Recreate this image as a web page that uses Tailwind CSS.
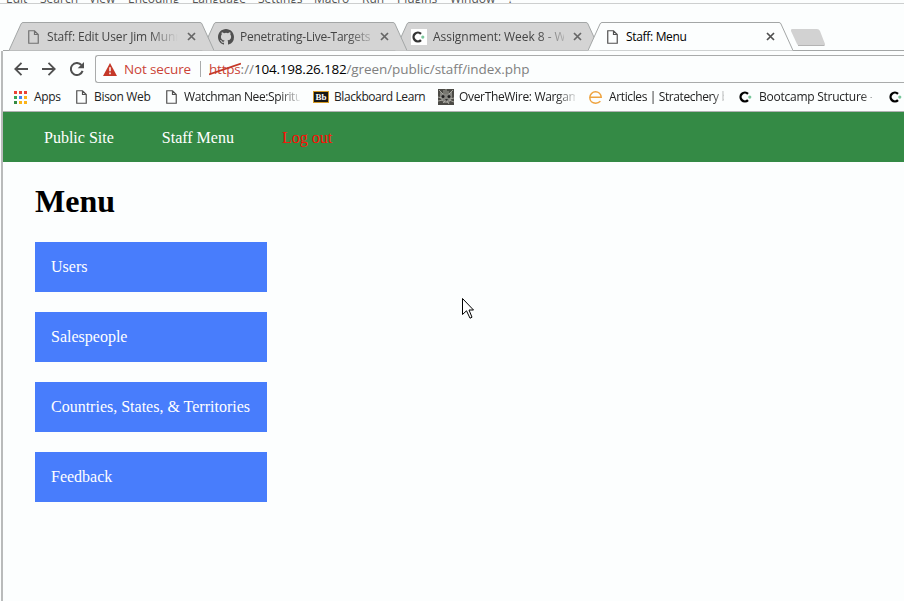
<!DOCTYPE html>
<html lang="en">
<head>
<meta charset="utf-8">
<title>Staff: Menu</title>
<script src="https://cdn.jsdelivr.net/npm/@tailwindcss/browser@4"></script>
</head>
<body class="w-[904px] h-[601px] overflow-hidden bg-[#fcfefe] font-['Open_Sans','Noto_Sans',sans-serif] text-[12px] text-[#222]">
<svg class="hidden">
  <symbol id="page" viewBox="0 0 11 14"><path d="M.75 .75H6.5L10.25 4.5V13.25H.75ZM6.5 .75V4.5H10.25" fill="none" stroke="currentColor" stroke-width="1.2"/></symbol>
  <symbol id="close" viewBox="0 0 9 9"><path d="M1 1L8 8M8 1L1 8" stroke="currentColor" stroke-width="1.7"/></symbol>
  <symbol id="cpath" viewBox="0 0 16 16"><path d="M10 4.8A4.4 4.4 0 1 0 10 11.2" fill="none" stroke="currentColor" stroke-width="2.4"/><circle cx="11.8" cy="8.1" r="1.6" fill="#79c79b"/></symbol>
  <symbol id="tab" viewBox="0 0 205 29"><path d="M0 28.5L12 2Q12.7 .5 14 .5H191Q192.5 .5 193 2L205 28.5Z" fill="currentColor"/><path d="M0 28.5L12 2Q12.7 .5 14 .5H191Q192.5 .5 193 2L205 28.5" fill="none" stroke="#a3a6a6"/></symbol>
</svg>

<div class="h-[4px] overflow-hidden border-b border-[#cdcfcf]">
  <div class="-mt-[9px] ml-[6px] flex h-[16px] leading-[16px] text-[#555] whitespace-nowrap">
    <span class="w-[34px]">Edit</span><span class="w-[49px]">Search</span><span class="w-[39px]">View</span><span class="w-[64px]">Encoding</span><span class="w-[66px]">Language</span><span class="w-[56px]">Settings</span><span class="w-[48px]">Macro</span><span class="w-[35px]">Run</span><span class="w-[53px]">Plugins</span><span class="w-[58px]">Window</span><span>?</span>
  </div>
</div>

<div class="relative flex h-[47px] pt-[18px] pl-[9px] whitespace-nowrap">
  <div class="absolute left-[3px] right-0 bottom-0 h-px bg-[#a3a6a6]"></div>
  <div class="relative z-30 flex w-[205px] h-[29px] items-center -mr-[12px] pl-[19px] text-[#444]">
    <svg class="absolute inset-0 w-[205px] h-[29px] text-[#d4d4d4]"><use href="#tab"/></svg>
    <svg class="relative w-[11px] h-[14px] text-[#707070]"><use href="#page"/></svg>
    <span class="relative ml-[8px] w-[131px] overflow-hidden tracking-[-0.14px] [mask-image:linear-gradient(to_right,#000_78%,transparent_100%)]">Staff: Edit User Jim Munroe</span>
    <svg class="relative ml-[9px] w-[9px] h-[9px] text-[#666]"><use href="#close"/></svg>
  </div>
  <div class="relative z-20 flex w-[205px] h-[29px] items-center -mr-[12px] pl-[16px] text-[#444]">
    <svg class="absolute inset-0 w-[205px] h-[29px] text-[#d4d4d4]"><use href="#tab"/></svg>
    <svg class="relative w-[16px] h-[16px]" viewBox="0 0 16 16" fill="#505050"><path d="M8 0C3.58 0 0 3.58 0 8c0 3.54 2.29 6.53 5.47 7.59.4.07.55-.17.55-.38 0-.19-.01-.82-.01-1.49-2.01.37-2.53-.49-2.69-.94-.09-.23-.48-.94-.82-1.13-.28-.15-.68-.52-.01-.53.63-.01 1.08.58 1.23.82.72 1.21 1.87.87 2.33.66.07-.52.28-.87.51-1.07-1.78-.2-3.64-.89-3.64-3.95 0-.87.31-1.59.82-2.15-.08-.2-.36-1.02.08-2.12 0 0 .67-.21 2.2.82a7.7 7.7 0 0 1 4 0c1.53-1.04 2.2-.82 2.2-.82.44 1.1.16 1.92.08 2.12.51.56.82 1.27.82 2.15 0 3.07-1.87 3.75-3.65 3.95.29.25.54.73.54 1.48 0 1.07-.01 1.93-.01 2.2 0 .21.15.46.55.38A8.01 8.01 0 0 0 16 8c0-4.42-3.58-8-8-8Z"/></svg>
    <span class="relative ml-[6px] w-[131px] overflow-hidden tracking-[-0.25px] [mask-image:linear-gradient(to_right,#000_82%,transparent_106%)]">Penetrating-Live-Targets</span>
    <svg class="relative ml-[9px] w-[9px] h-[9px] text-[#666]"><use href="#close"/></svg>
  </div>
  <div class="relative z-10 flex w-[205px] h-[29px] items-center -mr-[12px] pl-[16px] text-[#444]">
    <svg class="absolute inset-0 w-[205px] h-[29px] text-[#d4d4d4]"><use href="#tab"/></svg>
    <svg class="relative w-[16px] h-[16px] bg-white text-[#333]"><use href="#cpath"/></svg>
    <span class="relative ml-[6px] w-[131px] overflow-hidden tracking-[-0.05px] [mask-image:linear-gradient(to_right,#000_80%,transparent_106%)]">Assignment: Week 8 - Web</span>
    <svg class="relative ml-[9px] w-[9px] h-[9px] text-[#666]"><use href="#close"/></svg>
  </div>
  <div class="relative z-40 flex w-[205px] h-[29px] items-center pl-[19px]">
    <svg class="absolute inset-0 w-[205px] h-[29px] text-[#fcfefe]"><use href="#tab"/></svg>
    <svg class="relative w-[11px] h-[14px] text-[#505050]"><use href="#page"/></svg>
    <span class="relative ml-[8px] w-[132px] tracking-[-0.32px] text-black">Staff: Menu</span>
    <svg class="relative ml-[8px] w-[9px] h-[9px] text-[#505050]"><use href="#close"/></svg>
  </div>
  <svg class="mt-[7px] -ml-[2px] w-[34px] h-[18px]" viewBox="0 0 34 18"><path d="M1 0H26Q28 0 29 2L34 15Q34.500 17 33 17H9Q7 17 6 15L0 2Q-.3 0 1 0Z" fill="#d2d2d2"/><path d="M7 16.500H33" stroke="#b3b3b3"/></svg>
</div>

<div class="ml-[1px] border-l-2 border-[#b9bbbb] h-[550px]">
  <div class="flex h-[32px] pt-[4px] pl-[11px]">
    <svg class="mt-[7px] w-[14px] h-[14px]" viewBox="0 0 14 14" fill="none" stroke="#505050" stroke-width="1.8"><path d="M14 7H1.500M7.500 .8L1.300 7L7.500 13.200"/></svg>
    <svg class="ml-[14px] mt-[7px] w-[14px] h-[14px]" viewBox="0 0 14 14" fill="none" stroke="#505050" stroke-width="1.8"><path d="M0 7H12.500M6.500 .8L12.700 7L6.500 13.200"/></svg>
    <svg class="ml-[14px] mt-[7px] w-[14px] h-[14px]" viewBox="0 0 14 14"><path d="M11.400 3A6 6 0 1 0 12.600 8.900" fill="none" stroke="#505050" stroke-width="2"/><path d="M14 0V6.300H7.700Z" fill="#505050"/></svg>
    <div class="ml-[11px] flex h-[28px] flex-1 items-center rounded-l-[3px] border border-r-0 border-[#a9abab] pl-[7px] text-[13.500px] whitespace-nowrap">
      <svg class="w-[14px] h-[13px]" viewBox="0 0 14 13"><path d="M7 0L14 13H0Z" fill="#c53929"/><path d="M7 4.300V8.300M7 9.600V11.200" stroke="#fff" stroke-width="1.500"/></svg>
      <span class="ml-[7px] w-[76px] text-[#cb4437] tracking-[-0.15px]">Not secure</span>
      <span class="h-[16px] w-px bg-[#a9abab]"></span>
      <span class="relative ml-[8px] text-[#cb4437] tracking-[-0.2px]">https<svg class="absolute left-0 top-[3px] w-[32px] h-[14px]" viewBox="0 0 32 14"><path d="M0 12.500L32 1.500" stroke="#c53929" stroke-width="1.700"/></svg></span><span class="text-[#808080]">://</span><span class="text-black tracking-[-0.23px]">104.198.26.182</span><span class="text-[#808080] tracking-[-0.07px]">/green/public/staff/index.php</span>
    </div>
  </div>

  <div class="flex h-[29px] items-center border-b border-[#b0b2b2] pl-[11px] overflow-hidden whitespace-nowrap">
    <svg class="w-[13px] h-[13px] shrink-0" viewBox="0 0 13 13"><path d="M0 0h3v3H0zM5 0h3v3H5zM10 0h3v3h-3z" fill="#ea4335"/><path d="M0 5h3v3H0z" fill="#34a853"/><path d="M5 5h3v3H5z" fill="#4285f4"/><path d="M10 5h3v3h-3zM5 10h3v3H5zM10 10h3v3h-3z" fill="#fbb41a"/><path d="M0 10h3v3H0z" fill="#348a43"/></svg>
    <span class="ml-[7px] w-[42px] shrink-0 tracking-[-0.3px]">Apps</span>
    <svg class="w-[11px] h-[14px] shrink-0 text-[#505050]"><use href="#page"/></svg>
    <span class="ml-[7px] w-[72px] shrink-0 tracking-[-0.32px]">Bison Web</span>
    <svg class="w-[11px] h-[14px] shrink-0 text-[#505050]"><use href="#page"/></svg>
    <span class="ml-[7px] w-[116px] shrink-0 overflow-hidden tracking-[-0.38px] [mask-image:linear-gradient(to_right,#000_82%,transparent_102%)]">Watchman Nee:Spiritual</span>
    <span class="ml-[13px] flex h-[12px] w-[16px] shrink-0 items-center justify-center border border-[#d49a25] bg-[#171717] font-['Liberation_Serif',serif] text-[9px] leading-none font-bold text-white">Bb</span>
    <span class="ml-[5px] w-[104px] shrink-0 tracking-[-0.42px]">Blackboard Learn</span>
    <svg class="w-[16px] h-[16px] shrink-0" viewBox="0 0 16 16"><path d="M0 0h16v16H0z" fill="#4b4b46"/><path d="M2 3l4 2h4l4-3v7l-3 5H6L2 9z" fill="#858580"/><path d="M1 1l4 4M15 1l-4 4M6 1v4M8 0v5M10 2v3M0 8l4 1M0 12l5-1M16 9l-4 1M16 13l-5-2M5 14l2-2M11 15l-2-3" stroke="#b9b9b0" stroke-width=".8"/><circle cx="5" cy="7.500" r="1.500" fill="#222"/><circle cx="11" cy="7.500" r="1.500" fill="#222"/><path d="M7 10h3l-1.500 2z" fill="#333"/></svg>
    <span class="ml-[5px] w-[116px] shrink-0 overflow-hidden tracking-[-0.33px] [mask-image:linear-gradient(to_right,#000_84%,transparent_103%)]">OverTheWire: Wargames</span>
    <svg class="ml-[14px] w-[13px] h-[13px] shrink-0" viewBox="0 0 13 13"><path d="M.8 6.300H12.200C12 2.900 9.500 .8 6.500 .8S.8 3.300 .8 6.600S3.300 12.200 6.700 12.200C8.800 12.200 10.200 11.500 11.400 10.300" fill="none" stroke="#eea33f" stroke-width="1.500"/></svg>
    <span class="ml-[7px] w-[115px] shrink-0 overflow-hidden tracking-[-0.38px] [mask-image:linear-gradient(to_right,#000_90%,transparent_103%)]">Articles | Stratechery by</span>
    <svg class="ml-[14px] w-[16px] h-[16px] shrink-0 text-black"><use href="#cpath"/></svg>
    <span class="ml-[5px] w-[113px] shrink-0 overflow-hidden tracking-[-0.25px] [mask-image:linear-gradient(to_right,#000_90%,transparent_106%)]">Bootcamp Structure - C</span>
    <svg class="ml-[16px] w-[16px] h-[16px] shrink-0 text-black"><use href="#cpath"/></svg>
  </div>

  <div class="font-['Liberation_Serif',serif] text-[16px] leading-[18px]">
    <nav class="flex h-[50px] items-center gap-[48px] bg-[#348a45] pl-[41px] pt-px text-white">
      <a>Public Site</a><a>Staff Menu</a><a class="text-[#ff0d05]">Log out</a>
    </nav>
    <main class="pl-[32px] pt-[21px]">
      <h1 class="text-[32px] leading-[37px] font-bold text-black">Menu</h1>
      <ul class="mt-[22px] flex w-[232px] flex-col gap-[20px] text-white">
        <li class="h-[50px] bg-[#487dfc] p-[16px]">Users</li>
        <li class="h-[50px] bg-[#487dfc] p-[16px]">Salespeople</li>
        <li class="h-[50px] bg-[#487dfc] p-[16px] whitespace-nowrap">Countries, States, &amp; Territories</li>
        <li class="h-[50px] bg-[#487dfc] p-[16px]">Feedback</li>
      </ul>
    </main>
  </div>
</div>
<svg class="absolute left-[462px] top-[298px] w-[12px] h-[21px]" viewBox="0 0 12 21"><path d="M.5 .5V16.500L4.500 12.800L8 20.200L10 19.200L7 12H11.500Z" fill="#fff" stroke="#000"/></svg>
</body>
</html>
